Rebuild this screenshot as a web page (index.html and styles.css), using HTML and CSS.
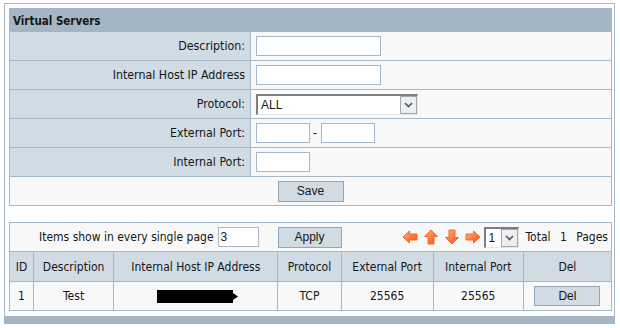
FILE: index.html
```html
<!DOCTYPE html>
<html>
<head>
    <title>Virtual Servers</title>
    <link rel="stylesheet" href="styles.css">
</head>
<body>
    <div class="frame">
        <div class="panel">
            <div class="panel-title">Virtual Servers</div>
            <div class="form-row">
                <label class="form-label">Description:</label>
                <div class="form-value"><input type="text" class="field field-long"></div>
            </div>
            <div class="form-row">
                <label class="form-label">Internal Host IP Address</label>
                <div class="form-value"><input type="text" class="field field-long"></div>
            </div>
            <div class="form-row">
                <label class="form-label">Protocol:</label>
                <div class="form-value">
                    <div class="select select-wide">
                        <span class="select-text">ALL</span>
                        <span class="select-drop">
                            <svg width="9" height="6" viewBox="0 0 9 6"><polyline points="1,1 4.5,4.5 8,1" fill="none" stroke="#4d5b68" stroke-width="1.6"/></svg>
                        </span>
                    </div>
                </div>
            </div>
            <div class="form-row">
                <label class="form-label">External Port:</label>
                <div class="form-value">
                    <input type="text" class="field field-port">
                    <span class="dash">-</span>
                    <input type="text" class="field field-port">
                </div>
            </div>
            <div class="form-row">
                <label class="form-label">Internal Port:</label>
                <div class="form-value"><input type="text" class="field field-port"></div>
            </div>
            <div class="form-row form-actions">
                <button class="btn btn-save">Save</button>
            </div>
        </div>

        <table class="list">
            <colgroup>
                <col class="c-id">
                <col class="c-desc">
                <col class="c-host">
                <col class="c-proto">
                <col class="c-ext">
                <col class="c-int">
                <col class="c-del">
            </colgroup>
            <tr class="list-tools">
                <td colspan="7">
                    <div class="tools">
                        <span class="tools-label">Items show in every single page</span>
                        <input type="text" class="field field-count" value="3">
                        <button class="btn btn-apply">Apply</button>
                        <div class="pager">
                            <svg class="nav-icon" width="16" height="16" viewBox="0 0 16 16"><path d="M1 8 L7.5 2 L7.5 5 L15 5 L15 11 L7.5 11 L7.5 14 Z" fill="url(#navFill)" stroke="#f26a2e" stroke-width="1"/></svg>
                            <svg class="nav-icon" width="16" height="16" viewBox="0 0 16 16"><path d="M8 1 L14.5 7.5 L11 7.5 L11 15 L5 15 L5 7.5 L1.5 7.5 Z" fill="url(#navFill)" stroke="#f26a2e" stroke-width="1"/></svg>
                            <svg class="nav-icon" width="16" height="16" viewBox="0 0 16 16"><path d="M8 15 L14.5 8.5 L11 8.5 L11 1 L5 1 L5 8.5 L1.5 8.5 Z" fill="url(#navFill)" stroke="#f26a2e" stroke-width="1"/></svg>
                            <svg class="nav-icon" width="16" height="16" viewBox="0 0 16 16"><path d="M15 8 L8.5 2 L8.5 5 L1 5 L1 11 L8.5 11 L8.5 14 Z" fill="url(#navFill)" stroke="#f26a2e" stroke-width="1"/></svg>
                            <div class="select select-page">
                                <span class="select-text">1</span>
                                <span class="select-drop">
                                    <svg width="9" height="6" viewBox="0 0 9 6"><polyline points="1,1 4.5,4.5 8,1" fill="none" stroke="#4d5b68" stroke-width="1.6"/></svg>
                                </span>
                            </div>
                            <span class="pager-total">Total 1 Pages</span>
                        </div>
                    </div>
                </td>
            </tr>
            <tr class="list-head">
                <th>ID</th>
                <th>Description</th>
                <th>Internal Host IP Address</th>
                <th>Protocol</th>
                <th>External Port</th>
                <th>Internal Port</th>
                <th>Del</th>
            </tr>
            <tr class="list-row">
                <td>1</td>
                <td>Test</td>
                <td>
                    <svg class="redacted" width="82" height="13" viewBox="0 0 82 13"><path d="M0 0 L76 0 L76 3 L81 6.5 L76 10 L76 13 L0 13 Z" fill="#000"/></svg>
                </td>
                <td>TCP</td>
                <td>25565</td>
                <td>25565</td>
                <td><button class="btn btn-del">Del</button></td>
            </tr>
        </table>
        <div class="frame-foot"></div>
    </div>

    <svg width="0" height="0" class="defs">
        <defs>
            <linearGradient id="navFill" x1="0" y1="0" x2="1" y2="1">
                <stop offset="0" stop-color="#ffb487"/>
                <stop offset="0.55" stop-color="#ff7a3c"/>
                <stop offset="1" stop-color="#f0521a"/>
            </linearGradient>
        </defs>
    </svg>
</body>
</html>
```

FILE: styles.css
```css
:root {
    --line: #a6b8c7;
    --title-bg: #a4b6c5;
    --label-bg: #d1dbe4;
    --value-bg: #f8f8f8;
    --text: #161616;
}

* {
    box-sizing: border-box;
}

body {
    margin: 0;
    font-family: 'DejaVu Sans Condensed', 'Liberation Sans', sans-serif;
    font-size: 12px;
    color: var(--text);
    background: #fff;
}

.frame {
    margin: 3px 0 0 4px;
    width: 611px;
    border: 1px solid var(--line);
    border-bottom: none;
    padding: 4px 2px 0 4px;
}

.panel {
    border: 1px solid var(--line);
}

.panel-title {
    height: 23px;
    background: var(--title-bg);
    font-weight: bold;
    font-size: 11.5px;
    padding: 5px 0 0 3px;
}

.form-row {
    display: flex;
    height: 29px;
    border-bottom: 1px solid var(--line);
}

.form-row:last-child {
    height: 28px;
    border-bottom: none;
}

.form-label {
    width: 241px;
    background: var(--label-bg);
    border-right: 1px solid var(--line);
    display: flex;
    align-items: center;
    justify-content: flex-end;
    padding-right: 5px;
    font-size: 12.3px;
}

.form-value {
    flex: 1;
    background: var(--value-bg);
    display: flex;
    align-items: center;
    padding-left: 5px;
}

.form-actions {
    background: var(--value-bg);
    justify-content: center;
    align-items: center;
}

.field {
    margin: 0;
    height: 20px;
    border: 1px solid var(--line);
    background: #fff;
    padding: 1px 3px;
    font-family: 'Liberation Sans', Arial, sans-serif;
    font-size: 12px;
    color: var(--text);
}

.field-long {
    width: 125px;
}

.field-port {
    width: 54px;
}

.field-count {
    width: 41px;
    padding: 1px 2px;
}

.dash {
    margin: 0 4px 0 3px;
    font-family: 'Liberation Sans', Arial, sans-serif;
    font-size: 12px;
}

.select {
    display: flex;
    align-items: stretch;
    height: 21px;
    background: #fff;
    border-top: 2px solid #7e7e7e;
    border-left: 2px solid #7e7e7e;
    border-right: 1px solid #e6e6e6;
    border-bottom: 1px solid #e6e6e6;
    font-family: 'Liberation Sans', Arial, sans-serif;
    font-size: 12px;
}

.select-wide {
    width: 162px;
}

.select-page {
    width: 35px;
}

.select-text {
    flex: 1;
    padding: 2px 0 0 3px;
}

.select-drop {
    width: 17px;
    border: 1px solid #a3a9b0;
    background: #eceef1;
    display: flex;
    align-items: center;
    justify-content: center;
}

.btn {
    margin: 0;
    height: 21px;
    padding: 0;
    background: var(--label-bg);
    border: 1px solid #92a8ba;
    font-family: 'Liberation Sans', Arial, sans-serif;
    font-size: 12px;
    color: var(--text);
}

.btn-save {
    width: 66px;
}

.btn-apply {
    width: 64px;
    margin-left: 19px;
}

.btn-del {
    width: 66px;
    height: 20px;
}

.list {
    margin-top: 16px;
    width: 603px;
    border-collapse: collapse;
    table-layout: fixed;
    border: 1px solid var(--line);
}

.c-id { width: 24px; }
.c-desc { width: 80px; }
.c-host { width: 164px; }
.c-proto { width: 63px; }
.c-ext { width: 92px; }
.c-int { width: 90px; }
.c-del { width: 88px; }

.list td,
.list th {
    border: 1px solid var(--line);
    padding: 0;
    text-align: center;
    font-weight: normal;
}

.list-tools td {
    height: 29px;
    background: var(--value-bg);
    text-align: left;
}

.tools {
    display: flex;
    align-items: center;
    padding: 0 3px 0 29px;
}

.tools-label {
    margin-right: 4px;
}

.pager {
    margin-left: auto;
    display: flex;
    align-items: center;
}

.nav-icon {
    margin-right: 5px;
}

.nav-icon:nth-child(4) {
    margin-right: 3px;
}

.pager-total {
    margin-left: 7px;
    word-spacing: 6px;
}

.list-head th {
    height: 30px;
    background: var(--label-bg);
}

.list-row td {
    height: 29px;
    background: var(--value-bg);
}

.redacted {
    display: block;
    margin: 0 auto;
    position: relative;
    left: 2px;
}

.frame-foot {
    height: 8px;
    margin: 5px -2px 0 -4px;
    background: var(--title-bg);
}

.defs {
    position: absolute;
}
```
